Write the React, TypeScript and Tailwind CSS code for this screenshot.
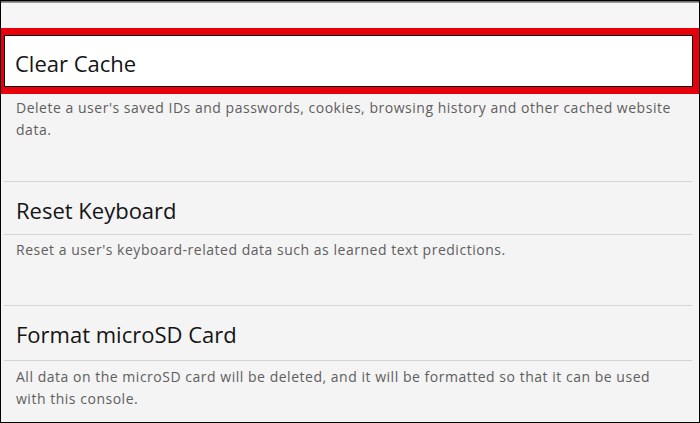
const items = [
  {
    title: "Reset Keyboard",
    desc: "Reset a user's keyboard-related data such as learned text predictions.",
    titleH: "h-[52px] pt-[4px]",
    descH: "h-[70px] pt-[4px]",
  },
  {
    title: "Format microSD Card",
    desc: "All data on the microSD card will be deleted, and it will be formatted so that it can be used with this console.",
    titleH: "h-[54px] pt-[2px]",
    descH: "flex-1 pt-[5px]",
  },
];

const Divider = () => <div className="h-px bg-[#d4d4d4] ml-[3px] mr-[7px]" />;

export default function App() {
  return (
    <div className="w-[700px] h-[423px] border border-black bg-[#f4f4f4] flex flex-col overflow-hidden font-['Open_Sans',sans-serif]">
      <div className="h-px bg-[#6e6e6e]" />
      <div className="h-px bg-[#9a9a9a]" />
      <div className="h-[25px] bg-[#f6f6f6]" />

      {/* selected row */}
      <div className="h-[66px] border-t-[7px] border-b-[7px] border-l-[4px] border-r-[6px] border-[#e8000b] -ml-px">
        <div className="h-full border border-black bg-white flex items-center pl-[10px] pt-[5px]">
          <span className="text-[22px] text-[#141414] font-medium">Clear Cache</span>
        </div>
      </div>
      <div className="h-[87px] pl-[15px] pr-[20px] pt-[3px]">
        <p className="text-[14px] leading-[22px] tracking-[0.52px] text-[#5e5e5e]">
          Delete a user's saved IDs and passwords, cookies, browsing history and other cached website data.
        </p>
      </div>

      {items.map((item) => (
        <div key={item.title} className={`flex flex-col ${item.descH.startsWith("flex-1") ? "flex-1" : ""}`}>
          <Divider />
          <div className={`${item.titleH} flex items-center pl-[15px]`}>
            <span className="text-[22px] text-[#141414] font-medium">{item.title}</span>
          </div>
          <Divider />
          <div className={`${item.descH} pl-[15px] pr-[20px]`}>
            <p className="text-[14px] leading-[22px] tracking-[0.52px] text-[#5e5e5e]">{item.desc}</p>
          </div>
        </div>
      ))}
    </div>
  );
}
